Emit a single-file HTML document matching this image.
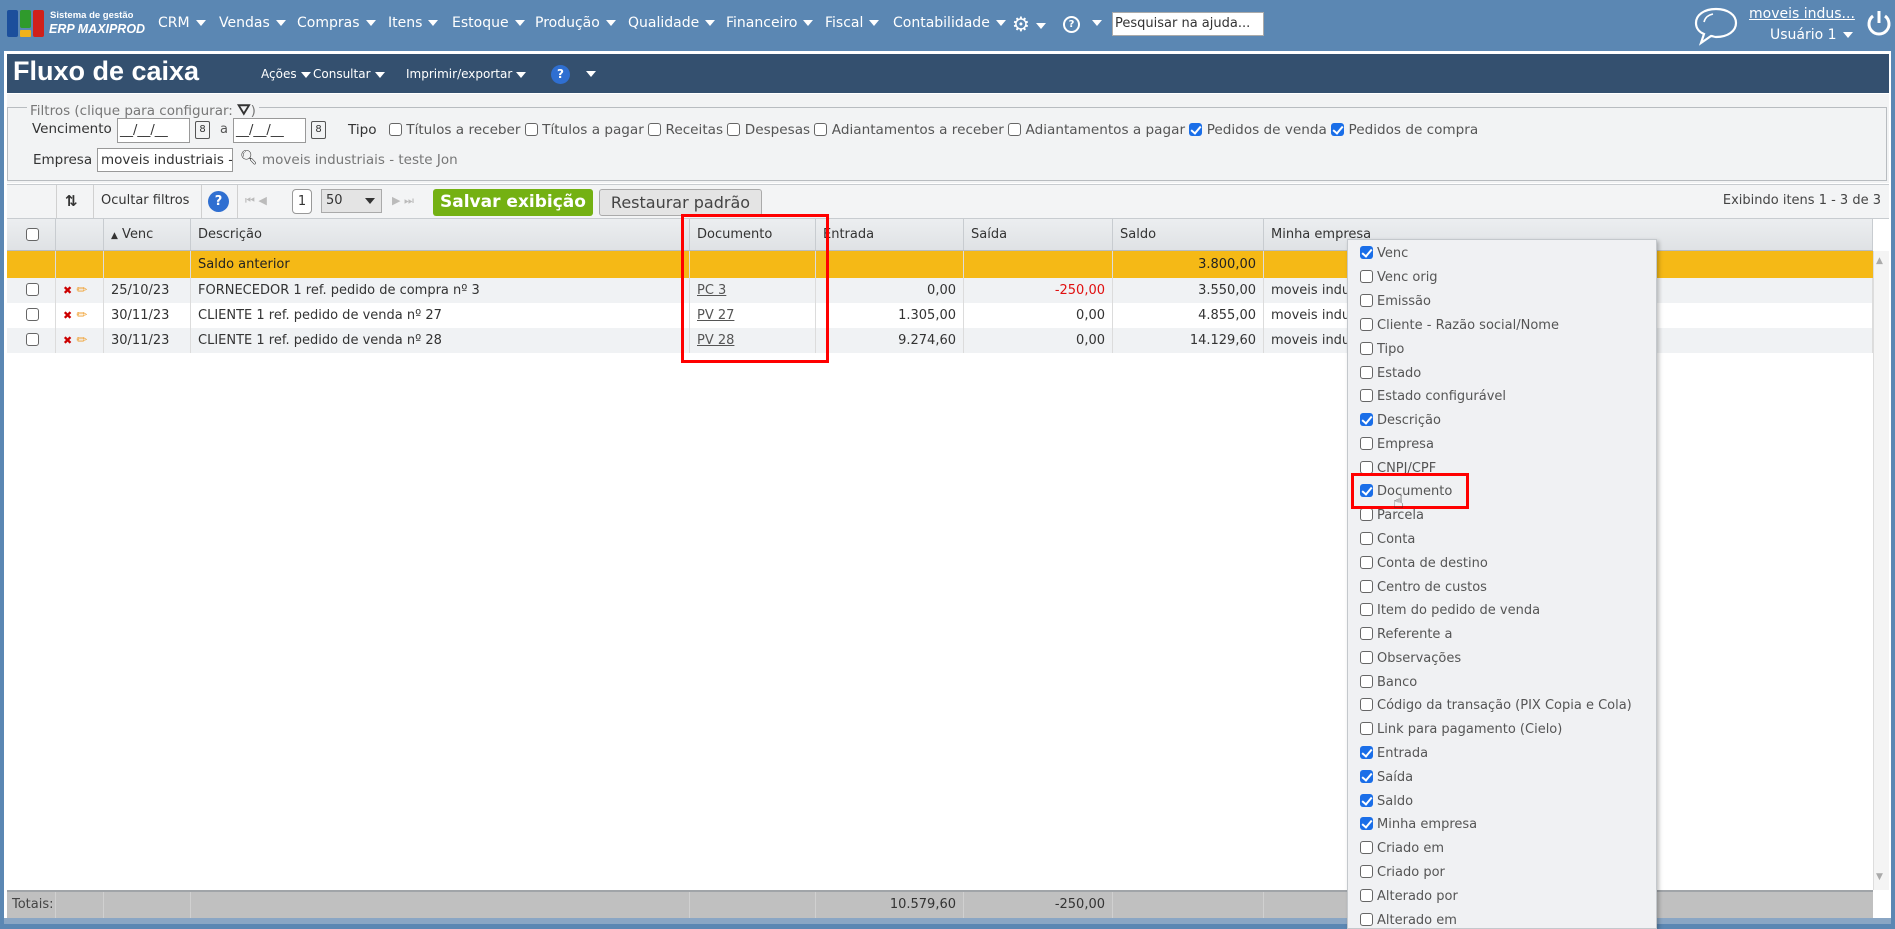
<!DOCTYPE html>
<html><head><meta charset="utf-8"><style>
*{box-sizing:border-box;margin:0;padding:0}
body{width:1895px;height:924px;overflow:hidden;background:#5b87b3;font-family:"DejaVu Sans","Liberation Sans",sans-serif;font-size:13px;color:#333;position:relative}
.a{position:absolute;white-space:nowrap}
.nav{color:#fff;font-size:14px;top:15px}
.tri{display:inline-block;width:0;height:0;border-left:5px solid transparent;border-right:5px solid transparent;border-top:6px solid #fff;vertical-align:middle;margin-left:6px}
.cb{display:inline-block;width:13px;height:13px;border:1px solid #666;border-radius:3px;background:#fff;vertical-align:-2px}
.cc{display:inline-block;width:13px;height:13px;border-radius:3px;background:#1a6ee8;vertical-align:-2px;position:relative}
.cc:after{content:"";position:absolute;left:4px;top:1px;width:4px;height:8px;border:solid #fff;border-width:0 2px 2px 0;transform:rotate(40deg)}
.row{position:absolute;left:7px;width:1866px;height:25px}
.cell{position:absolute;top:0;height:100%;line-height:25px;border-right:1px solid #dcdcdc;padding:0 7px;overflow:hidden}
.r{text-align:right}
.hd .cell{line-height:31px;border-right:1px solid #c8ccd0}
.mi{position:absolute;left:1360px;font-size:13px;color:#555}
.mi span{margin-right:4px}
a{color:#555;text-decoration:underline}
.tm{color:#fff;font-size:12px;top:67px}
</style></head><body>
<div class="a" style="left:7px;top:10px;width:11px;height:27px;background:#1c4f9c;border-radius:2px"></div>
<div class="a" style="left:20px;top:10px;width:11px;height:18px;background:#2f9a2c;border-radius:2px"></div>
<div class="a" style="left:20px;top:30px;width:11px;height:7px;background:#f2b21a;border-radius:1px"></div>
<div class="a" style="left:33px;top:10px;width:11px;height:27px;background:#d0201a;border-radius:2px"></div>
<div class="a" style="left:50px;top:10px;color:#fff;font-size:9.5px;font-weight:bold;font-family:'Liberation Sans',sans-serif">Sistema de gestão</div>
<div class="a" style="left:49px;top:22px;color:#fff;font-size:12.5px;font-weight:bold;font-style:italic;font-family:'Liberation Sans',sans-serif">ERP MAXIPROD</div>
<div class="a nav" style="left:158px">CRM<i class="tri"></i></div>
<div class="a nav" style="left:219px">Vendas<i class="tri"></i></div>
<div class="a nav" style="left:297px">Compras<i class="tri"></i></div>
<div class="a nav" style="left:388px">Itens<i class="tri"></i></div>
<div class="a nav" style="left:452px">Estoque<i class="tri"></i></div>
<div class="a nav" style="left:535px">Produção<i class="tri"></i></div>
<div class="a nav" style="left:628px">Qualidade<i class="tri"></i></div>
<div class="a nav" style="left:726px">Financeiro<i class="tri"></i></div>
<div class="a nav" style="left:825px">Fiscal<i class="tri"></i></div>
<div class="a nav" style="left:893px">Contabilidade<i class="tri"></i></div>
<div class="a nav" style="left:1012px;top:12px;font-size:20px">⚙<i class="tri"></i></div>
<div class="a" style="left:1063px;top:16px;width:17px;height:17px;border:2px solid #fff;border-radius:50%;color:#fff;font-size:10px;text-align:center;line-height:13px;font-weight:bold">?</div>
<div class="a" style="left:1086px;top:15px"><i class="tri"></i></div>
<div class="a" style="left:1112px;top:12px;width:152px;height:24px;background:#fff;border:1px solid #aaa;font-size:13px;line-height:22px;padding-left:2px;color:#333">Pesquisar na ajuda...</div>
<svg class="a" style="left:1692px;top:6px" width="48" height="40" viewBox="0 0 48 40"><path d="M24 3C12 3 4 9 4 17c0 5 3 9 8 11l-3 9 10-7c2 0 3 1 5 1 12 0 20-6 20-14S36 3 24 3z" fill="none" stroke="#fff" stroke-width="2.2"/><path d="M12 16c1-4 4-7 9-8" fill="none" stroke="#fff" stroke-width="1.6"/></svg>
<div class="a" style="left:1749px;top:6px;color:#fff;font-size:14px;text-decoration:underline">moveis indus...</div>
<div class="a" style="left:1770px;top:27px;color:#fff;font-size:14px">Usuário 1<i class="tri"></i></div>
<svg class="a" style="left:1865px;top:9px" width="28" height="30" viewBox="0 0 28 30"><path d="M8 7a10 10 0 1 0 12 0" fill="none" stroke="#fff" stroke-width="3"/><path d="M14 2v12" stroke="#fff" stroke-width="3"/></svg>
<div class="a" style="left:4px;top:51px;width:1887px;height:873px;background:#fff"></div>
<div class="a" style="left:7px;top:54px;width:1882px;height:39px;background:#34506f"></div>
<div class="a" style="left:13px;top:56px;color:#fff;font-size:27px;font-weight:bold;font-family:'Liberation Sans',sans-serif">Fluxo de caixa</div>
<div class="a tm" style="left:261px">Ações<i class="tri" style="margin-left:4px"></i></div>
<div class="a tm" style="left:313px">Consultar<i class="tri" style="margin-left:4px"></i></div>
<div class="a tm" style="left:406px">Imprimir/exportar<i class="tri" style="margin-left:4px"></i></div>
<div class="a" style="left:551px;top:65px;width:19px;height:19px;border-radius:50%;background:#2f6fd1;color:#fff;font-size:12px;font-weight:bold;text-align:center;line-height:19px">?</div>
<div class="a" style="left:580px;top:66px"><i class="tri"></i></div>
<div class="a" style="left:7px;top:94px;width:1882px;height:89px;background:#f2f3f4"></div>
<div class="a" style="left:7px;top:107px;width:1880px;height:74px;border:1px solid #b8bcc0"></div>
<div class="a" style="left:27px;top:100px;background:#f2f3f4;padding:0 3px;color:#777;font-size:13.5px">Filtros (clique para configurar: <b style="font-size:16px;color:#333">⛛</b>)</div>
<div class="a" style="left:32px;top:121px;font-size:13.5px">Vencimento</div>
<div class="a" style="left:117px;top:118px;width:73px;height:25px;background:#fff;border:1px solid #999;line-height:23px;padding-left:2px">__/__/__</div>
<div class="a" style="left:195px;top:121px;width:15px;height:18px;border:1px solid #555;border-radius:2px;font-size:10px;text-align:center;line-height:16px">8</div>
<div class="a" style="left:220px;top:122px;color:#555">a</div>
<div class="a" style="left:233px;top:118px;width:73px;height:25px;background:#fff;border:1px solid #999;line-height:23px;padding-left:2px">__/__/__</div>
<div class="a" style="left:311px;top:121px;width:15px;height:18px;border:1px solid #555;border-radius:2px;font-size:10px;text-align:center;line-height:16px">8</div>
<div class="a" style="left:348px;top:122px;font-size:13.6px">Tipo <span class="cb" style="margin-left:8px"></span> <span style="color:#555">Títulos a receber</span> <span class="cb"></span> <span style="color:#555">Títulos a pagar</span> <span class="cb"></span> <span style="color:#555">Receitas</span> <span class="cb"></span> <span style="color:#555">Despesas</span> <span class="cb"></span> <span style="color:#555">Adiantamentos a receber</span> <span class="cb"></span> <span style="color:#555">Adiantamentos a pagar</span> <span class="cc"></span> <span style="color:#555">Pedidos de venda</span> <span class="cc"></span> <span style="color:#555">Pedidos de compra</span></div>
<div class="a" style="left:33px;top:152px;font-size:13.5px">Empresa</div>
<div class="a" style="left:97px;top:148px;width:136px;height:24px;background:#fff;border:1px solid #999;line-height:22px;padding-left:3px;overflow:hidden;font-size:13.5px">moveis industriais -</div>
<div class="a" style="left:240px;top:150px;font-size:14px">🔍︎</div>
<div class="a" style="left:262px;top:152px;color:#777;font-size:13.5px">moveis industriais - teste Jon</div>
<div class="a" style="left:7px;top:184px;width:1882px;height:35px;background:#f3f4f5;border-top:1px solid #c8ccd0;border-bottom:1px solid #c8ccd0"></div>
<div class="a" style="left:56px;top:185px;width:1px;height:33px;background:#d0d0d0"></div>
<div class="a" style="left:93px;top:185px;width:1px;height:33px;background:#d0d0d0"></div>
<div class="a" style="left:201px;top:185px;width:1px;height:33px;background:#d0d0d0"></div>
<div class="a" style="left:237px;top:185px;width:1px;height:33px;background:#d0d0d0"></div>
<div class="a" style="left:65px;top:192px;font-size:15px;font-weight:bold">⇅</div>
<div class="a" style="left:101px;top:193px">Ocultar filtros</div>
<div class="a" style="left:208px;top:191px;width:21px;height:21px;border-radius:50%;background:#2f6fd1;color:#fff;font-weight:bold;text-align:center;line-height:21px">?</div>
<div class="a" style="left:245px;top:194px;color:#bbb;font-size:11px">⏮ ◀</div>
<div class="a" style="left:292px;top:189px;width:20px;height:25px;border:1px solid #999;border-radius:4px;background:#fff;text-align:center;line-height:23px">1</div>
<div class="a" style="left:321px;top:189px;width:61px;height:24px;border:1px solid #aaa;background:#e4e4e4;line-height:22px;padding-left:4px">50<span style="position:absolute;right:6px;top:8px;border-left:5px solid transparent;border-right:5px solid transparent;border-top:6px solid #333"></span></div>
<div class="a" style="left:392px;top:194px;color:#bbb;font-size:11px">▶ ⏭</div>
<div class="a" style="left:433px;top:189px;width:160px;height:27px;background:#74b113;border-radius:3px;color:#fff;font-weight:bold;font-size:17px;text-align:center;line-height:27px">Salvar exibição</div>
<div class="a" style="left:599px;top:189px;width:163px;height:27px;background:#e4e4e4;border:1px solid #aaa;border-radius:3px;color:#444;font-size:16px;text-align:center;line-height:25px">Restaurar padrão</div>
<div class="a" style="right:14px;top:193px;color:#444">Exibindo itens 1 - 3 de 3</div>
<div class="row hd" style="top:219px;height:32px;background:linear-gradient(#eceef0,#dfe2e5);border-bottom:1px solid #b8bcc0">
<div class="cell" style="left:0;width:49px"><span class="cb" style="margin-left:12px;vertical-align:-3px"></span></div>
<div class="cell" style="left:49px;width:48px"></div>
<div class="cell" style="left:97px;width:87px"><span style="font-size:9px">▲</span> Venc</div>
<div class="cell" style="left:184px;width:499px">Descrição</div>
<div class="cell" style="left:683px;width:126px">Documento</div>
<div class="cell" style="left:809px;width:148px">Entrada</div>
<div class="cell" style="left:957px;width:149px">Saída</div>
<div class="cell" style="left:1106px;width:151px">Saldo</div>
<div class="cell" style="left:1257px;width:609px">Minha empresa</div>
</div>
<div class="row" style="top:251px;height:27px;background:#f5b916">
<div class="cell" style="left:0;width:49px;line-height:27px"></div><div class="cell" style="left:49px;width:48px"></div><div class="cell" style="left:97px;width:87px"></div>
<div class="cell" style="left:184px;width:499px;line-height:27px;color:#222">Saldo anterior</div>
<div class="cell" style="left:683px;width:126px"></div><div class="cell" style="left:809px;width:148px"></div><div class="cell" style="left:957px;width:149px"></div>
<div class="cell r" style="left:1106px;width:151px;line-height:27px;color:#222">3.800,00</div>
</div>
<div class="row" style="top:278px;background:#f0f2f4">
<div class="cell" style="left:0;width:49px"><span class="cb" style="margin-left:12px"></span></div>
<div class="cell" style="left:49px;width:48px"><span style="color:#c00;font-size:11px;font-weight:bold">✖</span> <span style="color:#f0a030">✏</span></div>
<div class="cell" style="left:97px;width:87px">25/10/23</div>
<div class="cell" style="left:184px;width:499px">FORNECEDOR 1 ref. pedido de compra nº 3</div>
<div class="cell" style="left:683px;width:126px"><a>PC 3</a></div>
<div class="cell r" style="left:809px;width:148px">0,00</div>
<div class="cell r" style="left:957px;width:149px;color:#e01010">-250,00</div>
<div class="cell r" style="left:1106px;width:151px">3.550,00</div>
<div class="cell" style="left:1257px;width:609px">moveis industriais</div>
</div>
<div class="row" style="top:303px;background:#fff">
<div class="cell" style="left:0;width:49px"><span class="cb" style="margin-left:12px"></span></div>
<div class="cell" style="left:49px;width:48px"><span style="color:#c00;font-size:11px;font-weight:bold">✖</span> <span style="color:#f0a030">✏</span></div>
<div class="cell" style="left:97px;width:87px">30/11/23</div>
<div class="cell" style="left:184px;width:499px">CLIENTE 1 ref. pedido de venda nº 27</div>
<div class="cell" style="left:683px;width:126px"><a>PV 27</a></div>
<div class="cell r" style="left:809px;width:148px">1.305,00</div>
<div class="cell r" style="left:957px;width:149px">0,00</div>
<div class="cell r" style="left:1106px;width:151px">4.855,00</div>
<div class="cell" style="left:1257px;width:609px">moveis industriais</div>
</div>
<div class="row" style="top:328px;background:#f0f2f4">
<div class="cell" style="left:0;width:49px"><span class="cb" style="margin-left:12px"></span></div>
<div class="cell" style="left:49px;width:48px"><span style="color:#c00;font-size:11px;font-weight:bold">✖</span> <span style="color:#f0a030">✏</span></div>
<div class="cell" style="left:97px;width:87px">30/11/23</div>
<div class="cell" style="left:184px;width:499px">CLIENTE 1 ref. pedido de venda nº 28</div>
<div class="cell" style="left:683px;width:126px"><a>PV 28</a></div>
<div class="cell r" style="left:809px;width:148px">9.274,60</div>
<div class="cell r" style="left:957px;width:149px">0,00</div>
<div class="cell r" style="left:1106px;width:151px">14.129,60</div>
<div class="cell" style="left:1257px;width:609px">moveis industriais</div>
</div>
<div class="a" style="left:1873px;top:251px;width:16px;height:639px;background:#f4f4f4;border-left:1px solid #ddd"></div>
<div class="a" style="left:1876px;top:256px;color:#aaa;font-size:9px">▲</div>
<div class="a" style="left:1876px;top:872px;color:#aaa;font-size:9px">▼</div>
<div class="row" style="top:890px;height:28px;background:#c0c0c0;border-top:2px solid #a0a4a8">
<div class="cell" style="left:0;width:49px;line-height:26px;color:#444;border-color:#d0d0d0;padding:0 5px">Totais:</div>
<div class="cell" style="left:49px;width:48px;border-color:#d0d0d0"></div>
<div class="cell" style="left:97px;width:87px;border-color:#d0d0d0"></div>
<div class="cell" style="left:184px;width:499px;border-color:#d0d0d0"></div>
<div class="cell" style="left:683px;width:126px;border-color:#d0d0d0"></div>
<div class="cell r" style="left:809px;width:148px;line-height:26px;color:#333;border-color:#d0d0d0">10.579,60</div>
<div class="cell r" style="left:957px;width:149px;line-height:26px;color:#333;border-color:#d0d0d0">-250,00</div>
<div class="cell" style="left:1106px;width:151px;border-color:#d0d0d0"></div>
</div>
<div class="a" style="left:4px;top:918px;width:1887px;height:6px;background:#8aa6c4"></div>
<div class="a" style="left:681px;top:214px;width:148px;height:149px;border:3px solid #f00"></div>
<div class="a" style="left:1347px;top:239px;width:310px;height:690px;background:#f0f1f3;border:1px solid #c4c8cc;box-shadow:2px 2px 4px rgba(0,0,0,.25)"></div>
<div class="mi" style="top:246px"><span class="cc"></span>Venc</div>
<div class="mi" style="top:270px"><span class="cb"></span>Venc orig</div>
<div class="mi" style="top:294px"><span class="cb"></span>Emissão</div>
<div class="mi" style="top:318px"><span class="cb"></span>Cliente - Razão social/Nome</div>
<div class="mi" style="top:342px"><span class="cb"></span>Tipo</div>
<div class="mi" style="top:366px"><span class="cb"></span>Estado</div>
<div class="mi" style="top:389px"><span class="cb"></span>Estado configurável</div>
<div class="mi" style="top:413px"><span class="cc"></span>Descrição</div>
<div class="mi" style="top:437px"><span class="cb"></span>Empresa</div>
<div class="mi" style="top:461px"><span class="cb"></span>CNPJ/CPF</div>
<div class="mi" style="top:484px"><span class="cc"></span>Documento</div>
<div class="mi" style="top:508px"><span class="cb"></span>Parcela</div>
<div class="mi" style="top:532px"><span class="cb"></span>Conta</div>
<div class="mi" style="top:556px"><span class="cb"></span>Conta de destino</div>
<div class="mi" style="top:580px"><span class="cb"></span>Centro de custos</div>
<div class="mi" style="top:603px"><span class="cb"></span>Item do pedido de venda</div>
<div class="mi" style="top:627px"><span class="cb"></span>Referente a</div>
<div class="mi" style="top:651px"><span class="cb"></span>Observações</div>
<div class="mi" style="top:675px"><span class="cb"></span>Banco</div>
<div class="mi" style="top:698px"><span class="cb"></span>Código da transação (PIX Copia e Cola)</div>
<div class="mi" style="top:722px"><span class="cb"></span>Link para pagamento (Cielo)</div>
<div class="mi" style="top:746px"><span class="cc"></span>Entrada</div>
<div class="mi" style="top:770px"><span class="cc"></span>Saída</div>
<div class="mi" style="top:794px"><span class="cc"></span>Saldo</div>
<div class="mi" style="top:817px"><span class="cc"></span>Minha empresa</div>
<div class="mi" style="top:841px"><span class="cb"></span>Criado em</div>
<div class="mi" style="top:865px"><span class="cb"></span>Criado por</div>
<div class="mi" style="top:889px"><span class="cb"></span>Alterado por</div>
<div class="mi" style="top:913px"><span class="cb"></span>Alterado em</div>
<div class="a" style="left:1351px;top:473px;width:118px;height:36px;border:3px solid #f00"></div>
<div class="a" style="left:1393px;top:492px;font-size:18px;color:#333">☝</div>
</body></html>
